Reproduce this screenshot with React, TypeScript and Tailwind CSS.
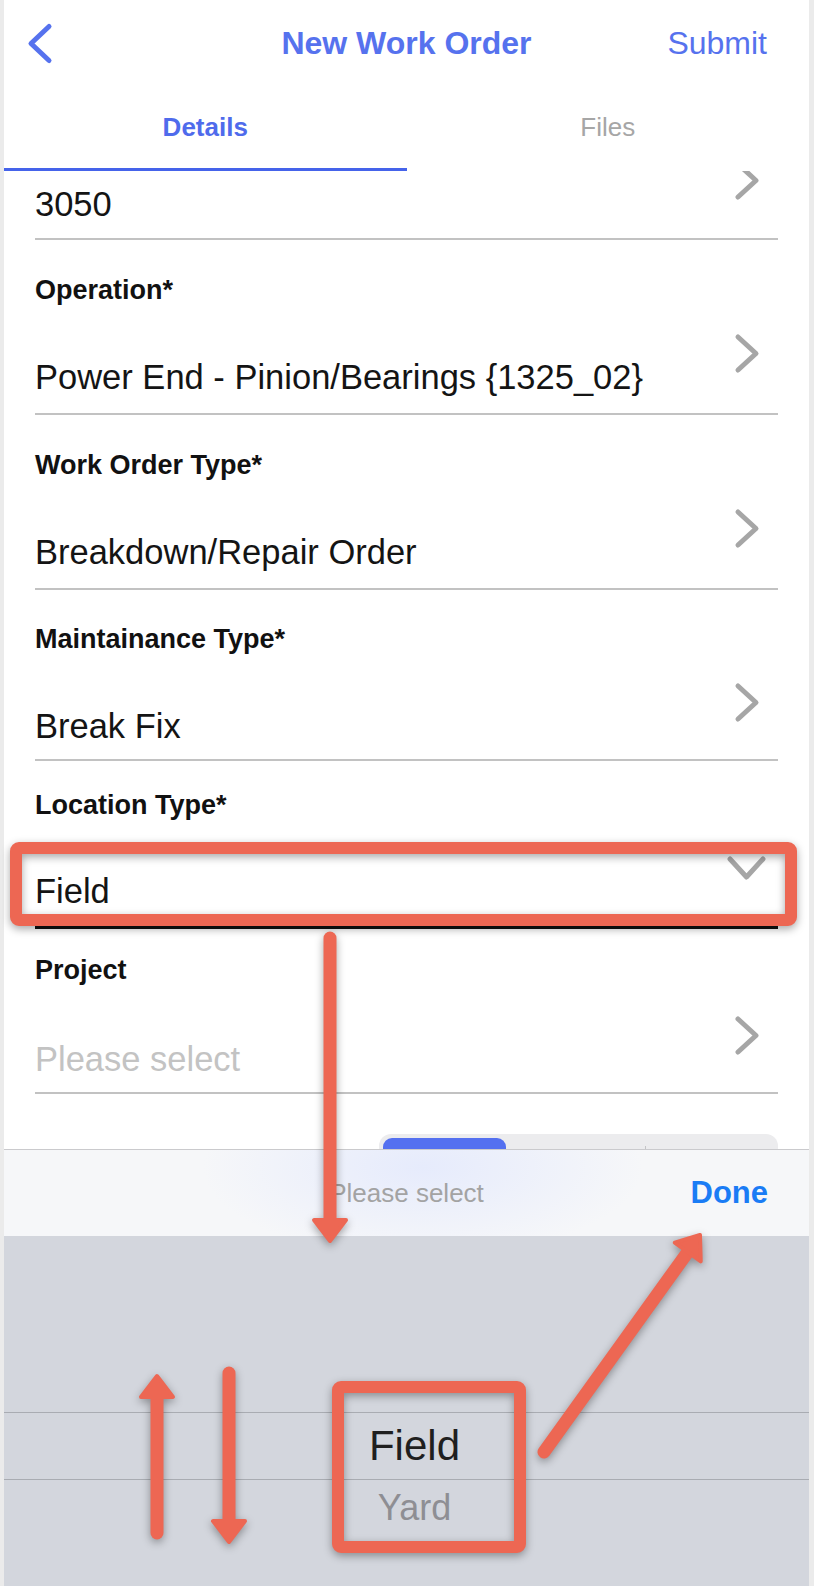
import React from "react";

type Row = {
  label: string;
  value: string;
  placeholder?: boolean;
  down?: boolean;
  labelCls: string;
  valueCls: string;
  rowCls: string;
};

const rows: Row[] = [
  {
    label: "Operation*",
    value: "Power End - Pinion/Bearings {1325_02}",
    labelCls: "mt-[35px]",
    valueCls: "mt-[52px]",
    rowCls: "pb-[16px] border-b-2 border-[#c2c2c2]",
  },
  {
    label: "Work Order Type*",
    value: "Breakdown/Repair Order",
    labelCls: "mt-[35px]",
    valueCls: "mt-[52px]",
    rowCls: "pb-[16px] border-b-2 border-[#c2c2c2]",
  },
  {
    label: "Maintainance Type*",
    value: "Break Fix",
    labelCls: "mt-[34px]",
    valueCls: "mt-[52px]",
    rowCls: "pb-[13px] border-b-2 border-[#c2c2c2]",
  },
  {
    label: "Location Type*",
    value: "Field",
    down: true,
    labelCls: "mt-[29px]",
    valueCls: "mt-[51px]",
    rowCls: "pb-[15px] border-b-[3px] border-[#111]",
  },
  {
    label: "Project",
    value: "Please select",
    placeholder: true,
    labelCls: "mt-[26px]",
    valueCls: "mt-[54px]",
    rowCls: "pb-[13px] border-b-2 border-[#c2c2c2]",
  },
];

const ChevronRight = () => (
  <svg width="28" height="45" viewBox="0 0 28 45" className="mr-[17px] mb-[47px] shrink-0">
    <path d="M5 6 L23 22.5 L5 39" fill="none" stroke="#a6a6a6" strokeWidth="5" strokeLinecap="round" strokeLinejoin="round" />
  </svg>
);

const ChevronDown = () => (
  <svg width="45" height="28" viewBox="0 0 45 28" className="mr-[9px] mb-[46px] shrink-0">
    <path d="M6 5 L22.5 23 L39 5" fill="none" stroke="#a6a6a6" strokeWidth="5" strokeLinecap="round" strokeLinejoin="round" />
  </svg>
);

const Arrow = ({ x1, y1, x2, y2 }: { x1: number; y1: number; x2: number; y2: number }) => {
  const dx = x2 - x1;
  const dy = y2 - y1;
  const len = Math.hypot(dx, dy);
  const ux = dx / len;
  const uy = dy / len;
  const px = -uy;
  const py = ux;
  const hl = 21;
  const hw = 16;
  const bx = x2 - ux * hl;
  const by = y2 - uy * hl;
  const pts = `${x2},${y2} ${bx + px * hw},${by + py * hw} ${bx - px * hw},${by - py * hw}`;
  return (
    <g>
      <line x1={x1} y1={y1} x2={bx + ux * 2} y2={by + uy * 2} stroke="#ed6753" strokeWidth="13" strokeLinecap="round" />
      <polygon points={pts} fill="#ed6753" stroke="#ed6753" strokeWidth="4" strokeLinejoin="round" />
    </g>
  );
};

const Annotations = () => (
  <svg
    width="814"
    height="1586"
    viewBox="0 0 814 1586"
    className="pointer-events-none absolute left-0 top-0 drop-shadow-[0_3px_4px_rgba(0,0,0,0.35)]"
  >
    <rect x="16" y="848" width="775" height="72" rx="3" fill="none" stroke="#ed6753" strokeWidth="12" />
    <rect x="338" y="1387" width="182" height="160" rx="3" fill="none" stroke="#ed6753" strokeWidth="12" />
    <Arrow x1={330} y1={938} x2={330} y2={1241} />
    <Arrow x1={157} y1={1533} x2={157} y2={1376} />
    <Arrow x1={229} y1={1373} x2={229} y2={1542} />
    <Arrow x1={544} y1={1452} x2={700} y2={1235} />
  </svg>
);

export default function App() {
  return (
    <div className="relative h-[1586px] w-[814px] overflow-hidden bg-[#ebebeb] pl-[4px] pr-[5px] font-['Liberation_Sans',Arial,sans-serif]">
      <div className="flex h-full flex-col bg-white">
        {/* nav bar */}
        <div className="grid h-[86px] shrink-0 grid-cols-[1fr_auto_1fr] items-center">
          <svg width="28" height="45" viewBox="0 0 28 45" className="ml-[22px]">
            <path d="M23 5.5 L5 22.5 L23 39.5" fill="none" stroke="#5672ee" strokeWidth="5" strokeLinecap="round" strokeLinejoin="round" />
          </svg>
          <div className="text-[32px] font-bold leading-[40px] text-[#5672ee]">New Work Order</div>
          <div className="mr-[42px] justify-self-end text-[32px] leading-[40px] text-[#5672ee]">Submit</div>
        </div>

        {/* tabs */}
        <div className="flex h-[85px] shrink-0">
          <div className="flex flex-1 flex-col">
            <div className="flex flex-1 items-center justify-center text-[26px] font-bold text-[#4f6bec]">Details</div>
            <div className="h-[3px] bg-[#4563ea]" />
          </div>
          <div className="flex flex-1 flex-col">
            <div className="flex flex-1 items-center justify-center text-[26px] text-[#a6a6a6]">Files</div>
            <div className="h-[3px]" />
          </div>
        </div>

        {/* form */}
        <div className="flex-1 overflow-hidden px-[31px] text-[#141414]">
          <div className="border-b-2 border-[#c2c2c2] pb-[14px]">
            <div className="mt-[13px] flex h-[40px] items-center justify-between">
              <span className="text-[34.5px] leading-[40px]">3050</span>
              <ChevronRight />
            </div>
          </div>

          {rows.map((r) => (
            <div key={r.label} className={r.rowCls}>
              <div className={`${r.labelCls} h-[30px] text-[27px] font-bold leading-[30px] text-[#111]`}>{r.label}</div>
              <div className={`${r.valueCls} flex h-[40px] items-center justify-between`}>
                <span className={`text-[34.5px] leading-[40px] ${r.placeholder ? "text-[#c3c3c3]" : ""}`}>{r.value}</span>
                {r.down ? <ChevronDown /> : <ChevronRight />}
              </div>
            </div>
          ))}

          <div className="mt-[40px] flex justify-end">
            <div className="flex h-[52px] w-[399px] rounded-[12px] bg-[#ececee] p-[4px]">
              <div className="w-[123px] rounded-[9px] bg-[#5470f0]" />
              <div className="w-[139px]" />
              <div className="mt-[8px] h-[10px] w-px bg-[#c4c4c6]" />
              <div className="flex-1" />
            </div>
          </div>
        </div>

        {/* picker toolbar */}
        <div className="grid h-[87px] shrink-0 grid-cols-[1fr_auto_1fr] items-center border-t border-[#cacacd] bg-[#f6f7f9] bg-[radial-gradient(ellipse_220px_90px_at_52%_20%,#e6ebfc_0%,#f6f7f9_100%)]">
          <div />
          <div className="text-[26px] leading-[32px] text-[#a3a3a3]">Please select</div>
          <div className="mr-[41px] justify-self-end text-[31px] font-bold leading-[36px] text-[#1a7cf5]">Done</div>
        </div>

        {/* picker wheel */}
        <div className="flex h-[350px] shrink-0 flex-col bg-[#d3d6dd] pl-[16px] text-center">
          <div className="h-[176px]" />
          <div className="-ml-[16px] h-px bg-[#a9acb2]" />
          <div className="h-[66px] text-[42px] leading-[66px] text-[#1f1f1f]">Field</div>
          <div className="-ml-[16px] h-px bg-[#a9acb2]" />
          <div className="h-[56px] text-[36px] leading-[56px] text-[#8e8e93]">Yard</div>
        </div>
      </div>

      <Annotations />
    </div>
  );
}
